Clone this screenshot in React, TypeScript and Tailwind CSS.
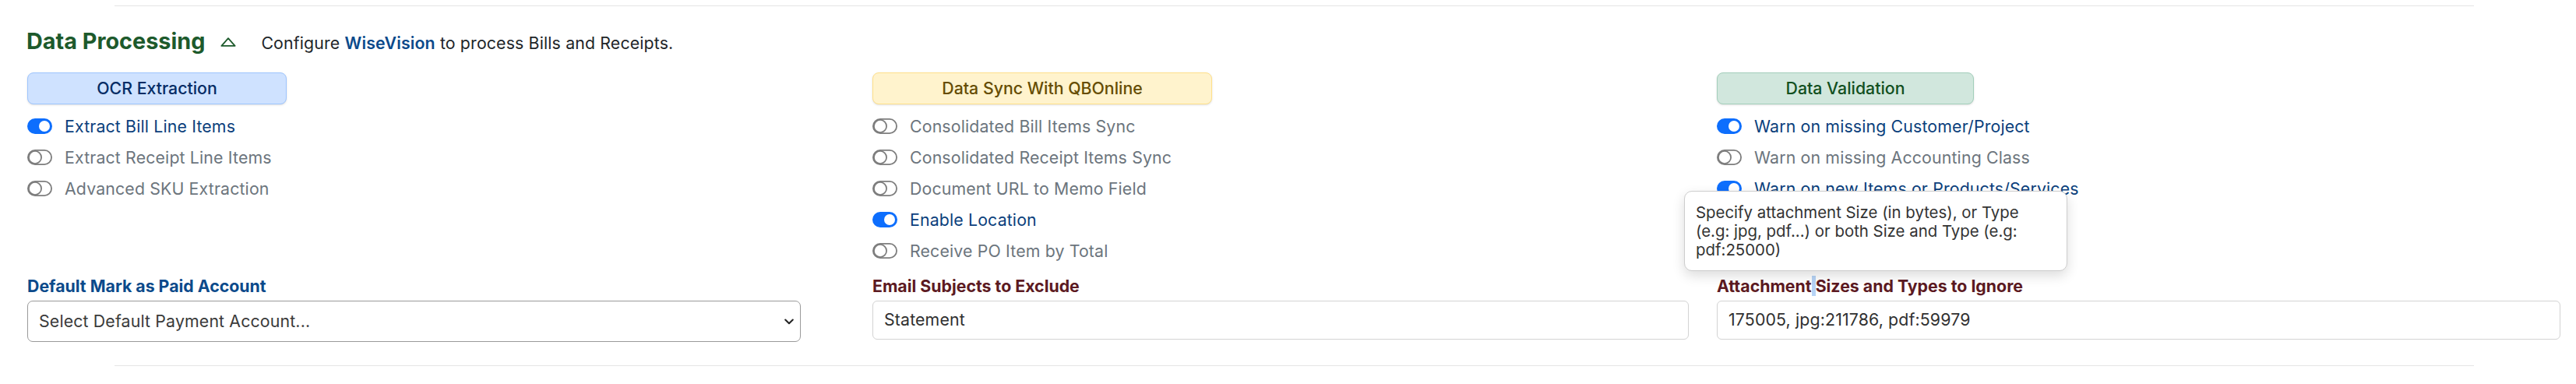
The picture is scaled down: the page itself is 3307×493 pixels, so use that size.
type Option = { label: string; on: boolean };

const ocrOptions: Option[] = [
  { label: "Extract Bill Line Items", on: true },
  { label: "Extract Receipt Line Items", on: false },
  { label: "Advanced SKU Extraction", on: false },
];

const syncOptions: Option[] = [
  { label: "Consolidated Bill Items Sync", on: false },
  { label: "Consolidated Receipt Items Sync", on: false },
  { label: "Document URL to Memo Field", on: false },
  { label: "Enable Location", on: true },
  { label: "Receive PO Item by Total", on: false },
];

const validationOptions: Option[] = [
  { label: "Warn on missing Customer/Project", on: true },
  { label: "Warn on missing Accounting Class", on: false },
  { label: "Warn on new Items or Products/Services", on: true },
];

function Switch({ on }: { on: boolean }) {
  if (on) {
    return (
      <svg width="32" height="20" viewBox="0 0 32 20" className="shrink-0">
        <rect x="0" y="0" width="32" height="20" rx="10" fill="#0d6efd" />
        <circle cx="22" cy="10" r="7" fill="#ffffff" />
      </svg>
    );
  }
  return (
    <svg width="32" height="20" viewBox="0 0 32 20" className="shrink-0">
      <rect x="0.9" y="0.9" width="30.2" height="18.2" rx="9.1" fill="#ffffff" stroke="#7d7d7d" strokeWidth="1.8" />
      <circle cx="10" cy="10" r="8.1" fill="#ffffff" stroke="#7d7d7d" strokeWidth="1.8" />
    </svg>
  );
}

function OptionList({ items }: { items: Option[] }) {
  return (
    <div className="mt-[8px] flex flex-col">
      {items.map((item) => (
        <div key={item.label} className="flex h-[40px] items-center gap-[16px]">
          <Switch on={item.on} />
          <span
            className={
              item.on
                ? "text-[21.3px] leading-[24px] tracking-[0.15px] text-[#0b3f7c]"
                : "text-[21.3px] leading-[24px] tracking-[0.15px] text-[#6c757d]"
            }
          >
            {item.label}
          </span>
        </div>
      ))}
    </div>
  );
}

export default function App() {
  return (
    <div className="relative h-[493px] w-[3307px] overflow-hidden bg-white font-['Inter',sans-serif] text-[#212529]">
      <div className="ml-[147px] mr-[131px] mt-[7px] h-px bg-[#e4e4e4]" />

      {/* header */}
      <div className="mt-[28px] flex items-center pl-[34px]">
        <h2 className="text-[28.8px] font-bold leading-[34px] text-[#1d5a2c]">Data Processing</h2>
        <svg width="20" height="12" viewBox="0 0 20 12" className="ml-[20px] mt-[2px]">
          <path d="M10 1.2 L18.6 10.9 H1.4 Z" fill="none" stroke="#1d5a2c" strokeWidth="1.8" strokeLinejoin="round" />
        </svg>
        <p className="ml-[32px] mt-[3px] text-[21.3px] leading-[24px] tracking-[0.15px] text-[#212529]">
          Configure <span className="font-semibold text-[#0b4a8b]">WiseVision</span> to process Bills and Receipts.
        </p>
      </div>

      <div className="mt-[23px] grid grid-cols-[1085px_1084px_1084px] pl-[35px]">
        {/* row 1 */}
        <div>
          <div className="flex h-[41px] w-[333px] items-center justify-center rounded-[8px] border border-[#9ec5fe] bg-[#cfe2ff] text-[21.3px] font-medium text-[#052c65] shadow-sm">
            OCR Extraction
          </div>
          <OptionList items={ocrOptions} />
        </div>
        <div>
          <div className="flex h-[41px] w-[436px] items-center justify-center rounded-[8px] border border-[#ffe08a] bg-[#fff3cd] text-[21.3px] font-medium text-[#664d03] shadow-sm">
            Data Sync With QBOnline
          </div>
          <OptionList items={syncOptions} />
        </div>
        <div>
          <div className="flex h-[41px] w-[330px] items-center justify-center rounded-[8px] border border-[#a3cfbb] bg-[#d1e7dd] text-[21.3px] font-medium text-[#12501f] shadow-sm">
            Data Validation
          </div>
          <OptionList items={validationOptions} />
        </div>

        {/* row 2 */}
        <div className="mt-[13px]">
          <label className="block text-[21.3px] font-bold leading-[24px] text-[#0b4a8b]">
            Default Mark as Paid Account
          </label>
          <div className="mt-[7px] flex h-[53px] w-[993px] items-center justify-between rounded-[7px] border border-[#9a9a9a] bg-white pl-[14px] pr-[8px]">
            <span className="text-[21.3px] tracking-[0.15px] text-[#3a3a3a]">Select Default Payment Account...</span>
            <svg width="12" height="8" viewBox="0 0 12 8">
              <path d="M1.2 1.5 L6 6.2 L10.8 1.5" fill="none" stroke="#222" strokeWidth="2" strokeLinecap="round" strokeLinejoin="round" />
            </svg>
          </div>
        </div>
        <div className="mt-[13px]">
          <label className="block text-[21.3px] font-bold leading-[24px] text-[#5c1a22]">
            Email Subjects to Exclude
          </label>
          <div className="mt-[7px] flex h-[50px] w-[1048px] items-center rounded-[6px] border border-[#d3d3d3] bg-white px-[14px] text-[21.3px] tracking-[0.15px] text-[#303030]">
            Statement
          </div>
        </div>
        <div className="mt-[13px]">
          <label className="block text-[21.3px] font-bold leading-[24px] text-[#5c1a22]">
            Attachment<span className="bg-[#b6d3f5]"> </span>Sizes and Types to Ignore
          </label>
          <div className="mt-[7px] flex h-[50px] w-[1083px] items-center rounded-[6px] border border-[#d3d3d3] bg-white px-[14px] text-[21.3px] tracking-[0.15px] text-[#303030]">
            175005, jpg:211786, pdf:59979
          </div>
        </div>
      </div>

      <div className="ml-[147px] mr-[131px] mt-[30px] h-px bg-[#e4e4e4]" />

      {/* tooltip over the attachment field */}
      <div className="absolute left-[2162px] top-[245px] h-[103px] w-[492px] rounded-[10px] border border-[#cdcdcd] bg-white px-[14px] pt-[15px] text-[20.4px] leading-[24px] text-[#333333] shadow-[0_6px_16px_rgba(0,0,0,0.14)]">
        Specify attachment Size (in bytes), or Type
        <br />
        (e.g: jpg, pdf...) or both Size and Type (e.g:
        <br />
        pdf:25000)
      </div>
    </div>
  );
}
